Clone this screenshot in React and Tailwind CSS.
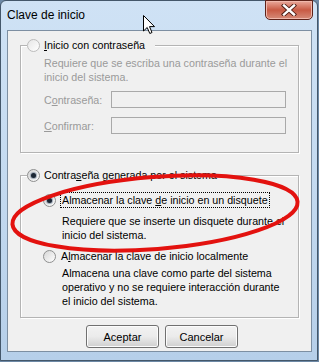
import React from "react"

function Radio({ checked, disabled }) {
  return (
    <span
      className={
        "relative inline-flex w-[13px] h-[13px] shrink-0 rounded-full border items-center justify-center " +
        (disabled
          ? "border-[#bcbcbc] bg-gradient-to-br from-[#e6e6e6] to-[#ffffff]"
          : "border-[#8e8f8f] bg-gradient-to-br from-[#d6d6d6] to-[#ffffff]")
      }
    >
      {checked && (
        <span className="w-[5px] h-[5px] rounded-full bg-[#1b2634] shadow-[0_0_1px_1px_#9aa6b4]"></span>
      )}
    </span>
  )
}

function Btn({ children }) {
  return (
    <button className="w-[73px] h-[23px] rounded-[3px] border border-[#707070] bg-gradient-to-b from-[#f2f2f2] via-[#ebebeb] to-[#cfcfcf] text-[11px] text-black shadow-[inset_0_0_0_1px_#fcfcfc]">
      {children}
    </button>
  )
}

export default function App() {
  return (
    <div
      className="relative w-[319px] h-[362px] overflow-hidden bg-[#6d89a6]"
      style={{ fontFamily: '"Liberation Sans", Arial, sans-serif' }}
    >
      <div className="w-[318px] h-[361px] rounded-t-[6px] border border-[#44576a] bg-gradient-to-b from-[#cfe2f5] via-[#c4daf0] to-[#b6cfe9] flex flex-col">
        {/* title bar */}
        <div className="h-[29px] flex items-start justify-between">
          <span className="ml-[6px] mt-[7px] text-[12px] text-black leading-[15px]">Clave de inicio</span>
          <div className="mr-[4px] w-[48px] h-[20px] -mt-[1px] rounded-b-[5px] border border-[#5e2219] bg-gradient-to-b from-[#e9a99c] via-[#c85a44] to-[#d58a78] flex items-center justify-center shadow-[inset_0_0_0_1px_#f0b8ac]">
            <svg width="16" height="12" viewBox="0 0 16 12">
              <path d="M3 1.5 L13 10.5 M13 1.5 L3 10.5" stroke="#4a1a12" strokeWidth="4.2" strokeLinecap="square" />
              <path d="M3 1.5 L13 10.5 M13 1.5 L3 10.5" stroke="#ffffff" strokeWidth="2.4" strokeLinecap="square" />
            </svg>
          </div>
        </div>

        {/* client area */}
        <div className="ml-[6px] w-[305px] h-[322px] border border-[#7d8fa2] bg-[#f0f0f0] flex flex-col text-[10.7px] leading-[14px]">
          {/* group 1 */}
          <div className="ml-[12px] mt-[14px] w-[279px] border border-[#b4b4b4] shadow-[inset_1px_1px_0_#ffffff,1px_1px_0_#ffffff] pb-[18px]">
            <div className="-mt-[8px] ml-[6px] w-fit pr-[10px] h-[14px] flex items-center gap-[4px] bg-[#f0f0f0]">
              <Radio disabled />
              <span className="text-black">
                <u>I</u>nicio con contraseña
              </span>
            </div>
            <div className="ml-[23px] mt-[4px] text-[#9a9a9a]">
              <div>Requiere que se escriba una contraseña durante el</div>
              <div>inicio del sistema.</div>
            </div>
            <div className="ml-[23px] mt-[7px] flex items-center">
              <span className="w-[67px] text-[#9a9a9a]">
                C<u>o</u>ntraseña:
              </span>
              <div className="w-[175px] h-[17px] border border-[#a9a9a9] bg-[#f0f0f0]"></div>
            </div>
            <div className="ml-[23px] mt-[9px] flex items-center">
              <span className="w-[67px] text-[#9a9a9a]">
                <u>C</u>onfirmar:
              </span>
              <div className="w-[175px] h-[17px] border border-[#a9a9a9] bg-[#f0f0f0]"></div>
            </div>
          </div>

          {/* group 2 */}
          <div className="ml-[12px] mt-[22px] w-[279px] border border-[#b4b4b4] shadow-[inset_1px_1px_0_#ffffff,1px_1px_0_#ffffff] pb-[9px]">
            <div className="-mt-[8px] ml-[6px] w-fit pr-[6px] h-[14px] flex items-center gap-[4px] bg-[#f0f0f0]">
              <Radio checked />
              <span className="text-black">
                Contra<u>s</u>eña generada por el sistema
              </span>
            </div>
            <div className="ml-[22px] mt-[10px] h-[16px] flex items-center gap-[4px]">
              <Radio checked />
              <span className="px-[1px] h-[16px] block leading-[14px] border border-dotted border-black text-black">
                <span>Almacenar la clave <u>d</u>e inicio en un disquete</span>
              </span>
            </div>
            <div className="ml-[41px] mt-[6px] text-black">
              <div>Requiere que se inserte un disquete durante el</div>
              <div>inicio del sistema.</div>
            </div>
            <div className="ml-[22px] mt-[6px] h-[16px] flex items-center gap-[5px]">
              <Radio />
              <span className="text-black">
                A<u>l</u>macenar la clave de inicio localmente
              </span>
            </div>
            <div className="ml-[41px] mt-[2px] text-black">
              <div>Almacena una clave como parte del sistema</div>
              <div>operativo y no se requiere interacción durante</div>
              <div>el inicio del sistema.</div>
            </div>
          </div>

          <div className="mt-[7px] ml-[78px] flex gap-[6px]">
            <Btn>Aceptar</Btn>
            <Btn>Cancelar</Btn>
          </div>
        </div>
      </div>

      {/* red annotation ellipse */}
      <svg className="absolute left-0 top-0 pointer-events-none" width="319" height="362" viewBox="0 0 319 362">
        <ellipse cx="155" cy="213" rx="143" ry="36" transform="rotate(-4.5 155 213)" fill="none" stroke="#e3120f" strokeWidth="4" />
      </svg>

      {/* mouse cursor */}
      <svg className="absolute left-[143px] top-[15px] pointer-events-none" width="13" height="20" viewBox="0 0 13 20">
        <path d="M0.5 0.5 L0.5 16 L4.2 12.5 L6.8 18.5 L9 17.5 L6.5 11.6 L11.5 11.6 Z" fill="#ffffff" stroke="#000000" strokeWidth="1" strokeLinejoin="miter" />
      </svg>
    </div>
  )
}
